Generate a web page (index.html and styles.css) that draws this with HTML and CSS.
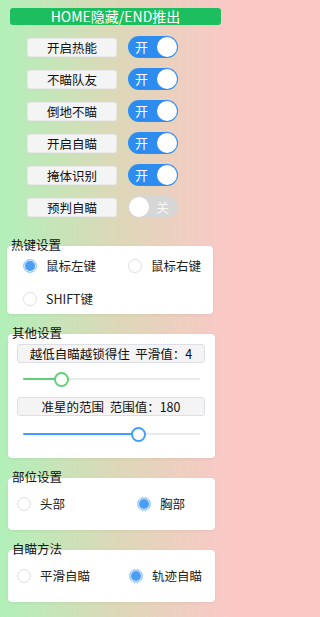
FILE: index.html
```html
<!DOCTYPE html>
<html lang="zh-CN">
<head>
<meta charset="utf-8">
<title>设置</title>
<link rel="stylesheet" href="styles.css">
</head>
<body>
<div class="page">
  <div class="header">HOME隐藏/END推出</div>

  <div class="switches">
    <div class="row"><span class="label">开启热能</span><span class="switch on"><span class="switch-text">开</span><span class="knob"></span></span></div>
    <div class="row"><span class="label">不瞄队友</span><span class="switch on"><span class="switch-text">开</span><span class="knob"></span></span></div>
    <div class="row"><span class="label">倒地不瞄</span><span class="switch on"><span class="switch-text">开</span><span class="knob"></span></span></div>
    <div class="row"><span class="label">开启自瞄</span><span class="switch on"><span class="switch-text">开</span><span class="knob"></span></span></div>
    <div class="row"><span class="label">掩体识别</span><span class="switch on"><span class="switch-text">开</span><span class="knob"></span></span></div>
    <div class="row row-sep"><span class="label">预判自瞄</span><span class="switch off"><span class="knob"></span><span class="switch-text">关</span></span></div>
  </div>

  <div class="section-title title-first">热键设置</div>
  <div class="card card-hotkey">
    <div class="radio-grid grid-hotkey">
      <label class="radio"><span class="dot checked"></span><span>鼠标左键</span></label>
      <label class="radio"><span class="dot"></span><span>鼠标右键</span></label>
      <label class="radio"><span class="dot"></span><span>SHIFT键</span></label>
    </div>
  </div>

  <div class="section-title">其他设置</div>
  <div class="card card-other">
    <div class="value-btn">越低自瞄越锁得住&nbsp;&nbsp;平滑值：4</div>
    <div class="slider slider-green">
      <div class="track"><div class="fill" style="width:22%"><span class="handle"></span></div></div>
    </div>
    <div class="value-btn btn-second">准星的范围&nbsp;&nbsp;范围值：180</div>
    <div class="slider slider-blue">
      <div class="track"><div class="fill" style="width:65%"><span class="handle"></span></div></div>
    </div>
  </div>

  <div class="section-title">部位设置</div>
  <div class="card card-small">
    <div class="radio-grid grid-part">
      <label class="radio"><span class="dot"></span><span>头部</span></label>
      <label class="radio"><span class="dot checked"></span><span>胸部</span></label>
    </div>
  </div>

  <div class="section-title">自瞄方法</div>
  <div class="card card-small">
    <div class="radio-grid grid-method">
      <label class="radio"><span class="dot"></span><span>平滑自瞄</span></label>
      <label class="radio"><span class="dot checked"></span><span>轨迹自瞄</span></label>
    </div>
  </div>
</div>
</body>
</html>
```

FILE: styles.css
```css
* { box-sizing: border-box; }

html {
  background: #fbc8c6;
}

html, body {
  margin: 0;
  padding: 0;
}

body {
  font-family: "Noto Sans CJK SC", "Noto Sans", sans-serif;
  font-size: 12.5px;
  color: #111;
}

.page {
  width: 228px;
  min-height: 617px;
  padding-top: 8px;
  overflow: hidden;
  background: linear-gradient(to right, #b2f0b8 0%, #dcd8b8 50%, #fbc8c6 100%);
}

.header {
  height: 17px;
  margin: 0 7px 0 10px;
  background: #1dbe5f;
  border-radius: 3px;
  color: #fff;
  font-size: 14px;
  line-height: 17px;
  text-align: center;
}

.switches {
  margin-top: 11px;
}

.row {
  display: flex;
  align-items: center;
  gap: 11px;
  height: 22px;
  margin-bottom: 10px;
  padding-left: 27px;
}

.row-sep {
  margin-top: 8px;
  margin-bottom: 0;
}

.label {
  width: 90px;
  height: 19px;
  background: #f4f4f5;
  border: 1px solid #e8e8ea;
  border-radius: 3px;
  text-align: center;
  line-height: 17px;
  color: #111;
}

.switch {
  display: flex;
  align-items: center;
  justify-content: space-between;
  width: 50px;
  height: 22px;
  border-radius: 11px;
  color: #fff;
  font-size: 13px;
  line-height: 20px;
}

.switch.on {
  background: #2d8cf0;
  padding: 0 1px 0 7px;
}

.switch.off {
  background: #d6d6d6;
  padding: 0 9px 0 1px;
  color: #f7f7f7;
}

.knob {
  width: 20px;
  height: 20px;
  border-radius: 50%;
  background: #fff;
}

.section-title {
  position: relative;
  z-index: 1;
  margin-top: 11px;
  margin-bottom: -7px;
  padding-left: 12px;
  height: 16px;
  line-height: 16px;
  color: #111;
}

.section-title.title-first {
  margin-top: 19px;
  padding-left: 11px;
}

.card {
  background: #fff;
  border-radius: 4px;
  box-shadow: 0 1px 3px rgba(0, 0, 0, 0.06);
  margin-left: 8px;
  width: 207px;
}

.card-hotkey {
  margin-left: 7px;
  width: 206px;
  height: 68px;
  padding: 10px 0 5px 16px;
}

.card-other {
  height: 124px;
  padding: 10px 0 17px 0;
}

.card-small {
  height: 52px;
  padding: 16px 0 16px 9px;
}

.radio-grid {
  display: grid;
  row-gap: 13px;
}

.grid-hotkey { grid-template-columns: 105px auto; }
.grid-part { grid-template-columns: 120px auto; }
.grid-method { grid-template-columns: 112px auto; }

.radio {
  display: flex;
  align-items: center;
  gap: 9px;
  height: 20px;
  color: #222;
  line-height: 20px;
}

.dot {
  flex: none;
  width: 14px;
  height: 14px;
  border-radius: 50%;
  border: 1px solid #dcdfe6;
  background: #fff;
}

.dot.checked {
  border-color: #a6cfff;
  background: #4a9ff5;
  box-shadow: inset 0 0 0 1px #e6f1ff;
}

.value-btn {
  height: 19px;
  margin: 0 10px 0 9px;
  background: #f4f4f5;
  border: 1px solid #dcdfe6;
  border-radius: 3px;
  text-align: center;
  line-height: 17px;
  color: #111;
}

.btn-second {
  margin-top: 11px;
}

.slider {
  height: 14px;
  margin: 9px 15px 0 15px;
  padding-top: 6px;
}

.slider-blue {
  margin-top: 11px;
}

.track {
  height: 2px;
  background: #e8eaee;
  border-radius: 1px;
}

.fill {
  position: relative;
  height: 2px;
  border-radius: 1px;
}

.slider-green .fill { background: #62cf78; }
.slider-blue .fill { background: #409eff; }

.handle {
  position: absolute;
  right: -7.5px;
  top: -6.5px;
  width: 15px;
  height: 15px;
  border-radius: 50%;
  background: #fff;
  border: 2px solid #62cf78;
}

.slider-blue .handle {
  border-color: #409eff;
}
```
